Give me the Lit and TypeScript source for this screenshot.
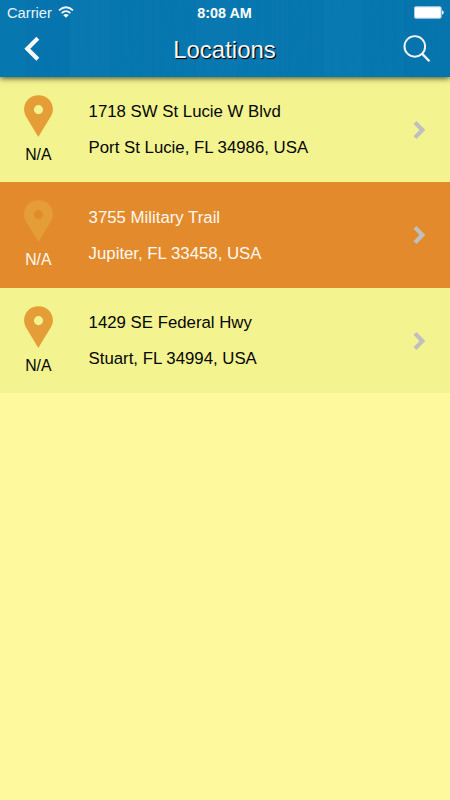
import { LitElement, html, css, svg } from "lit";
import { customElement, property } from "lit/decorators.js";
import { classMap } from "lit/directives/class-map.js";

interface Place {
  street: string;
  city: string;
  active?: boolean;
}

const places: Place[] = [
  { street: "1718 SW St Lucie W Blvd", city: "Port St Lucie, FL 34986, USA" },
  { street: "3755 Military Trail", city: "Jupiter, FL 33458, USA", active: true },
  { street: "1429 SE Federal Hwy", city: "Stuart, FL 34994, USA" },
];

// Vertical seams between the planks of the header texture.
const seams = [27, 69, 111, 153, 195, 238, 280, 323, 363, 405];

@customElement("location-row")
export class LocationRow extends LitElement {
  @property({ attribute: false }) place!: Place;

  static styles = css`
    :host { display: block; }
    .row {
      box-sizing: border-box;
      height: 105.45px;
      display: grid;
      grid-template-columns: 76.6px 1fr auto;
      column-gap: 12px;
      padding-right: 24px;
      background: #f3f48f;
      color: #050505;
    }
    .active { background: #e38b2c; color: #fff8f2; }
    .marker {
      display: flex;
      flex-direction: column;
      align-items: center;
      padding-top: 17.9px;
    }
    .pin { display: block; width: 29px; height: 42.4px; fill: #e59e37; }
    .distance { font-size: 15.8px; line-height: 18px; margin-top: 8.5px; }
    .address {
      padding-top: 17.2px;
      font-size: 16.8px;
      line-height: 36px;
      white-space: nowrap;
    }
    .arrow { display: block; width: 13px; height: 20px; align-self: center; margin-top: 0.4px; }
  `;

  render() {
    return html`
      <div class=${classMap({ row: true, active: !!this.place.active })}>
        <div class="marker">
          <svg class="pin" viewBox="0 0 29 43" preserveAspectRatio="none">
            <path fill-rule="evenodd" d="M14.5 0.3C6.4 0.3 0.1 6.5 0.1 14.4C0.1 18 1.3 20.5 2.8 23.2L14.3 42.6L26 23.2C27.7 20.3 28.9 18 28.9 14.4C28.9 6.5 22.6 0.3 14.5 0.3ZM14.5 10.2A4.6 4.6 0 1 1 14.5 19.4A4.6 4.6 0 1 1 14.5 10.2Z" />
          </svg>
          <div class="distance">N/A</div>
        </div>
        <div class="address">
          <div>${this.place.street}</div>
          <div>${this.place.city}</div>
        </div>
        <svg class="arrow" viewBox="0 0 13 20">
          <path d="M2 2.4L9.4 10L2 17.6" fill="none" stroke="#bfbfc1" stroke-width="4.2" />
        </svg>
      </div>
    `;
  }
}

@customElement("app-root")
export class AppRoot extends LitElement {
  static styles = css`
    :host {
      display: block;
      height: 800px;
      overflow: hidden;
      background: #fff99d;
      font-family: "Liberation Sans", Arial, sans-serif;
    }
    header {
      position: relative;
      z-index: 1;
      height: 77px;
      color: #fff;
      background: #0777b0;
      box-shadow: 0 1px 6px rgba(0, 0, 0, 0.75);
    }
    .grain { position: absolute; inset: 0; width: 450px; height: 77px; }
    .status, .nav {
      position: relative;
      display: grid;
      grid-template-columns: 1fr auto 1fr;
      align-items: center;
    }
    .status { height: 25px; padding: 0 7px; }
    .carrier { display: flex; align-items: center; gap: 6px; font-size: 14.7px; color: #e9f4fa; }
    .wifi { width: 16px; height: 12px; margin-top: -1px; }
    .time { font-size: 14.4px; font-weight: bold; margin-right: 1px; }
    .battery { width: 30px; height: 13px; justify-self: end; margin-right: -1px; }
    .nav { height: 48px; padding: 0 19px 0 24px; }
    .title {
      font-size: 24px;
      line-height: 28px;
      margin: 2px 6px 0 0;
      color: #f7f8fc;
      text-shadow: 1px 1px 1px #000, 1px 1px 0 rgba(0, 0, 0, 0.6);
    }
    .back { width: 17px; height: 26px; }
    .search { width: 28px; height: 28px; justify-self: end; }
    svg { display: block; }
  `;

  render() {
    return html`
      <header>
        <svg class="grain" viewBox="0 0 450 77">
          <rect x="27" width="42" height="77" fill="#00649e" opacity=".1" />
          <rect x="69" width="42" height="77" fill="#1685bb" opacity=".12" />
          <rect x="195" width="43" height="77" fill="#1685bb" opacity=".12" />
          <rect x="323" width="40" height="77" fill="#1685bb" opacity=".18" />
          <rect x="405" width="45" height="77" fill="#00649e" opacity=".12" />
          ${seams.map((x) => svg`
            <path d="M${x} 0V77" stroke="#00568c" opacity=".12" />
            <path d="M${x + 9} 0Q${x + 12} 36 ${x + 8} 77M${x + 20} 0Q${x + 17} 40 ${x + 22} 77M${x + 31} 0Q${x + 33} 38 ${x + 29} 77"
              fill="none" stroke="#005e98" opacity=".06" />
          `)}
        </svg>
        <div class="status">
          <div class="carrier">
            <span>Carrier</span>
            <svg class="wifi" viewBox="0 0 16 12">
              <g fill="none" stroke="#f2f8fb" stroke-width="1.8">
                <path d="M1 4.4Q8 -1.8 15 4.4" />
                <path d="M3.6 7.1Q8 3.2 12.4 7.1" />
              </g>
              <path d="M5.2 9Q8 6.8 10.8 9L8 11.8Z" fill="#f2f8fb" />
            </svg>
          </div>
          <div class="time">8:08 AM</div>
          <svg class="battery" viewBox="0 0 30 13">
            <rect x=".5" y=".8" width="26.6" height="11.4" rx="1.2" fill="#fff" stroke="#b5cfe9" />
            <path d="M28 4.2Q29.8 4.6 29.8 6.5Q29.8 8.4 28 8.8Z" fill="#e4eff9" />
          </svg>
        </div>
        <div class="nav">
          <svg class="back" viewBox="0 0 17 26">
            <path d="M13.8 2.3L3.3 12.8L13.8 23.3" fill="none" stroke="#fff" stroke-width="4.1" />
          </svg>
          <div class="title">Locations</div>
          <svg class="search" viewBox="0 0 28 28" fill="none" stroke="#f7f7ff">
            <circle cx="11.8" cy="11.4" r="10.3" stroke-width="1.9" />
            <path d="M19 18.6L26.4 26.3" stroke-width="2.3" />
          </svg>
        </div>
      </header>
      <main>${places.map((p) => html`<location-row .place=${p}></location-row>`)}</main>
    `;
  }
}
